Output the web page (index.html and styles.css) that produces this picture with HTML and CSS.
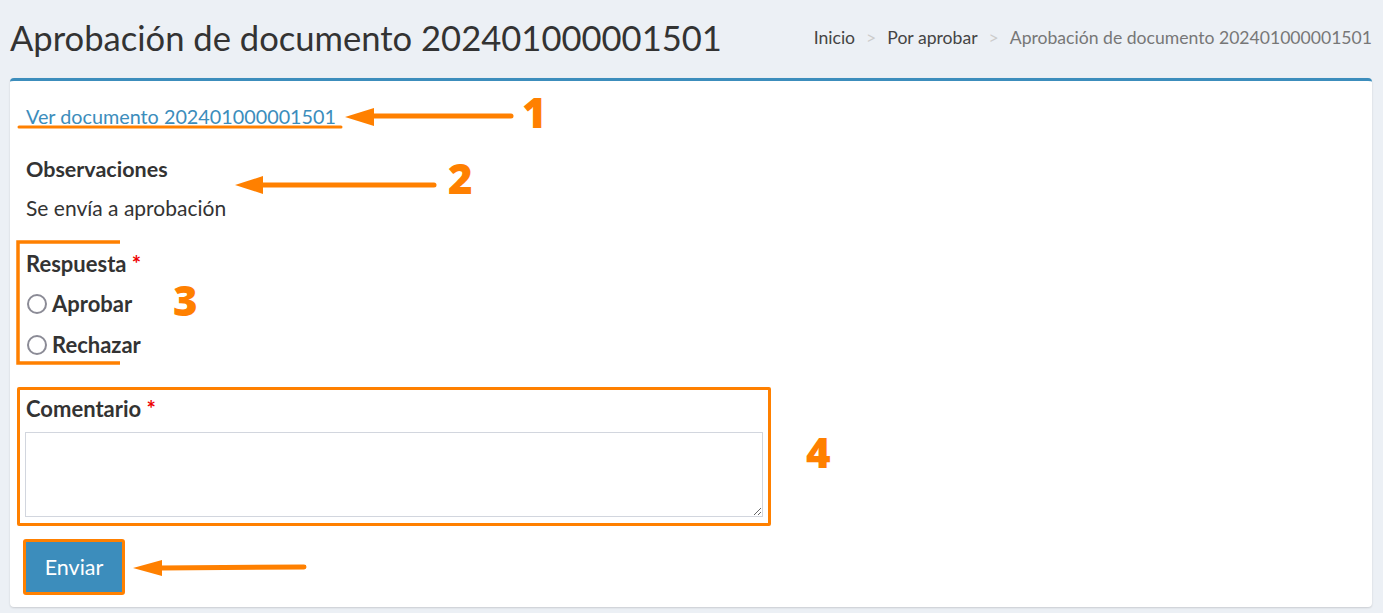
FILE: index.html
```html
<!DOCTYPE html>
<html lang="es">
<head>
  <meta charset="UTF-8">
  <title>Aprobación de documento 202401000001501</title>
  <link rel="stylesheet" href="styles.css">
</head>
<body>
  <section class="content-header">
    <h1>Aprobación de documento 202401000001501</h1>
    <ol class="breadcrumb">
      <li><a href="#">Inicio</a></li>
      <li><a href="#">Por aprobar</a></li>
      <li class="active">Aprobación de documento 202401000001501</li>
    </ol>
  </section>

  <section class="content">
    <div class="box">
      <div class="box-body">
        <a class="doc-link" href="#">Ver documento 202401000001501</a>

        <div class="obs">
          <h4>Observaciones</h4>
          <p>Se envía a aprobación</p>
        </div>

        <div class="form-group answer">
          <label class="field-label">Respuesta <span class="req">*</span></label>
          <label class="radio"><input type="radio" name="respuesta"> Aprobar</label>
          <label class="radio"><input type="radio" name="respuesta"> Rechazar</label>
        </div>

        <div class="form-group comment">
          <label class="field-label">Comentario <span class="req">*</span></label>
          <textarea rows="3"></textarea>
        </div>

        <button class="btn-send">Enviar</button>
      </div>
    </div>
  </section>

  <!-- annotation layer -->
  <svg class="marks" width="1383" height="613" viewBox="0 0 1383 613">
    <g stroke="#ff8000" stroke-linecap="round" fill="none">
      <line x1="19" y1="127" x2="341" y2="127" stroke-width="3"/>
      <line x1="370" y1="116" x2="511" y2="116" stroke-width="5"/>
      <line x1="260" y1="185" x2="434" y2="185" stroke-width="5"/>
      <line x1="160" y1="568" x2="304" y2="567" stroke-width="5"/>
      <polyline points="120,242 18,242 18,363 120,363" stroke-width="3.5" stroke-linecap="butt"/>
    </g>
    <g fill="#ff8000">
      <polygon points="345,117 374,108 374,126"/>
      <polygon points="235,185 263,176 263,194"/>
      <polygon points="133,568 162,560 162,576"/>
    </g>
  </svg>
  <span class="num n1">1</span>
  <span class="num n2">2</span>
  <span class="num n3">3</span>
  <span class="num n4">4</span>
</body>
</html>
```

FILE: styles.css
```css
* {
  box-sizing: border-box;
}

body {
  margin: 0;
  position: relative;
  height: 613px;
  overflow: hidden;
  background: #ecf0f5;
  font-family: Lato, "Noto Sans", sans-serif;
  color: #333;
}

.content-header {
  display: flex;
  justify-content: space-between;
  align-items: center;
  height: 78px;
  padding: 0 11px 4px 10px;
}

.content-header h1 {
  margin: 0;
  font-size: 34.6px;
  font-weight: 400;
  color: #333;
}

.breadcrumb {
  display: flex;
  margin: 0;
  padding: 0;
  list-style: none;
  font-size: 17.6px;
}

.breadcrumb li + li:before {
  content: ">";
  color: #ccc;
  padding: 0 11px;
}

.breadcrumb a {
  color: #444;
  text-decoration: none;
}

.breadcrumb .active {
  color: #777;
}

.content {
  padding: 0 11px 0 10px;
}

.box {
  background: #fff;
  border-top: 3px solid #3c8dbc;
  border-radius: 4px;
  box-shadow: 0 1px 2px rgba(0, 0, 0, 0.15);
  height: 529px;
}

.box-body {
  padding: 23px 16px 10px 16px;
}

.doc-link {
  display: block;
  color: #3c8dbc;
  font-size: 19.8px;
  text-decoration: none;
  line-height: 24px;
}

.obs {
  margin-top: 29px;
}

.obs h4 {
  margin: 0;
  font-size: 21.5px;
  font-weight: 700;
  line-height: 24px;
}

.obs p {
  margin: 15px 0 0;
  font-size: 21px;
  line-height: 24px;
}

.form-group {
  display: flex;
  flex-direction: column;
}

.answer {
  margin-top: 32px;
  gap: 14px;
}

.field-label {
  font-size: 22px;
  font-weight: 700;
  line-height: 24px;
}

.req {
  color: #e00;
}

.radio {
  display: flex;
  align-items: center;
  gap: 5px;
  font-size: 22px;
  font-weight: 700;
  line-height: 27px;
}

.radio input {
  appearance: none;
  margin: 0 0 0 1px;
  width: 20px;
  height: 20px;
  border: 2px solid #8b8b96;
  border-radius: 50%;
  background: #fff;
}

.comment {
  margin: 29px 0 0 -9px;
  width: 754px;
  border: 3px solid #ff8000;
  border-radius: 2px;
  padding: 7px 5px 6px 6px;
  gap: 11px;
}

.comment textarea {
  height: 85px;
  border: 1px solid #d2d6de;
  resize: vertical;
  margin-left: -1px;
  font-family: inherit;
}

.btn-send {
  margin: 13px 0 0 -3px;
  width: 102px;
  height: 56px;
  background: #3c8dbc;
  color: #fff;
  border: 3px solid #ff8000;
  border-radius: 3px;
  font-family: inherit;
  font-size: 21.5px;
}

.marks {
  position: absolute;
  top: 0;
  left: 0;
  pointer-events: none;
}

.num {
  position: absolute;
  color: #ff8000;
  font-family: "Open Sans", sans-serif;
  font-weight: 800;
  font-size: 42px;
  line-height: 1;
}

.n1 { left: 522px; top: 91px; }
.n2 { left: 448px; top: 157px; }
.n3 { left: 173px; top: 279px; }
.n4 { left: 806px; top: 431px; }
```
